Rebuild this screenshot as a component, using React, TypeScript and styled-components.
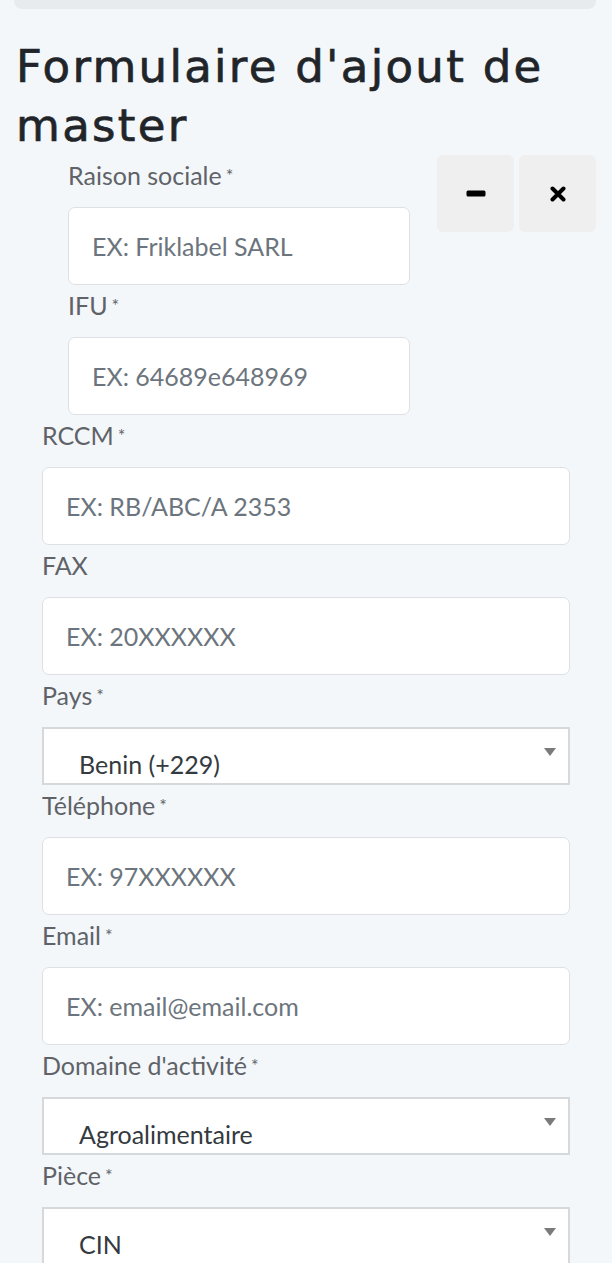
import React from "react";
import styled, { createGlobalStyle } from "styled-components";

const GlobalStyle = createGlobalStyle`
  html, body { margin: 0; padding: 0; background: #ffffff; }
  * { box-sizing: border-box; }
`;

const Page = styled.div`
  height: 1263px;
  overflow: hidden;
  background: #f3f7fa;
  padding: 0 16px;
  font-family: "Lato", "Liberation Sans", sans-serif;
`;

const TopBar = styled.div`
  height: 9px;
  margin: 0 0 0 -2px;
  background: #e8ebee;
  border-radius: 0 0 8px 8px;
`;

const Title = styled.h1`
  margin: 28px 0 0;
  font-family: "DejaVu Sans", "Inter", sans-serif;
  font-weight: 400;
  font-size: 45px;
  line-height: 59px;
  color: #212529;
  letter-spacing: 2.3px;
  -webkit-text-stroke: 0.7px #212529;
`;

const TopRow = styled.div`
  display: flex;
  align-items: flex-start;
`;

const LeftCol = styled.div`
  flex: 1;
  padding: 0 27px 0 52px;
`;

const ButtonGroup = styled.div`
  display: flex;
  gap: 5px;
`;

const IconButton = styled.button`
  width: 77px;
  height: 77px;
  border: none;
  border-radius: 6px;
  background: #efefef;
  display: flex;
  align-items: center;
  justify-content: center;
  color: #000;
  padding: 0;
`;

const Fields = styled.div`
  padding: 0 26px;
`;

const Field = styled.div`
  display: flex;
  flex-direction: column;
`;

const Label = styled.label`
  display: block;
  height: 34px;
  margin: 3px 0 15px;
  font-size: 25px;
  line-height: 34px;
  color: #5f6368;
  white-space: nowrap;
`;

const Star = styled.span`
  position: relative;
  top: -3px;
  font-size: 18px;
  line-height: 0;
  margin-left: 4px;
`;

const Input = styled.input`
  display: block;
  width: 100%;
  height: 78px;
  padding: 0 23px;
  border: 1.5px solid #dde1e5;
  border-radius: 7px;
  background: #fff;
  font-family: "Lato", "Liberation Sans", sans-serif;
  font-size: 25px;
  color: #212529;
  outline: none;
  &::placeholder { color: #6c757d; }
`;

const SelectWrap = styled.div`
  position: relative;
  height: 58px;
`;

const Select = styled.select`
  display: block;
  width: 100%;
  height: 58px;
  padding: 16px 60px 0 35px;
  appearance: none;
  -webkit-appearance: none;
  border: 2px solid #d6d9dc;
  border-radius: 0;
  background: #fff;
  font-family: "Lato", "Liberation Sans", sans-serif;
  font-size: 25px;
  color: #343a40;
  outline: none;
`;

const Arrow = styled.span`
  position: absolute;
  right: 14px;
  top: 21px;
  width: 0;
  height: 0;
  border-left: 6px solid transparent;
  border-right: 6px solid transparent;
  border-top: 8px solid #7a7a7a;
  pointer-events: none;
`;

const MinusIcon = () => (
  <svg width="20" height="7" viewBox="0 0 20 7" aria-hidden="true">
    <rect x="0.5" y="0.5" width="19" height="6" rx="1.5" fill="#000" />
  </svg>
);

const CloseIcon = () => (
  <svg width="16" height="16" viewBox="0 0 16 16" aria-hidden="true">
    <path d="M2.5 2.5L13.5 13.5M13.5 2.5L2.5 13.5" stroke="#000" strokeWidth="4" strokeLinecap="round" />
  </svg>
);

type FieldProps = { label: string; required?: boolean; placeholder: string };

const TextField = ({ label, required, placeholder }: FieldProps) => (
  <Field>
    <Label>
      {label}
      {required && <Star>*</Star>}
    </Label>
    <Input placeholder={placeholder} />
  </Field>
);

type SelectProps = { label: string; value: string };

const SelectField = ({ label, value }: SelectProps) => (
  <Field>
    <Label>
      {label}
      <Star>*</Star>
    </Label>
    <SelectWrap>
      <Select defaultValue={value}>
        <option value={value}>{value}</option>
      </Select>
      <Arrow />
    </SelectWrap>
  </Field>
);

export default function App() {
  return (
    <>
      <GlobalStyle />
      <Page>
        <TopBar />
        <Title>Formulaire d'ajout de master</Title>
        <TopRow>
          <LeftCol>
            <TextField label="Raison sociale" required placeholder="EX: Friklabel SARL" />
            <TextField label="IFU" required placeholder="EX: 64689e648969" />
          </LeftCol>
          <ButtonGroup>
            <IconButton aria-label="Réduire">
              <MinusIcon />
            </IconButton>
            <IconButton aria-label="Fermer">
              <CloseIcon />
            </IconButton>
          </ButtonGroup>
        </TopRow>
        <Fields>
          <TextField label="RCCM" required placeholder="EX: RB/ABC/A 2353" />
          <TextField label="FAX" placeholder="EX: 20XXXXXX" />
          <SelectField label="Pays" value="Benin (+229)" />
          <TextField label="Téléphone" required placeholder="EX: 97XXXXXX" />
          <TextField label="Email" required placeholder="EX: email@email.com" />
          <SelectField label="Domaine d'activité" value="Agroalimentaire" />
          <SelectField label="Pièce" value="CIN" />
        </Fields>
      </Page>
    </>
  );
}
